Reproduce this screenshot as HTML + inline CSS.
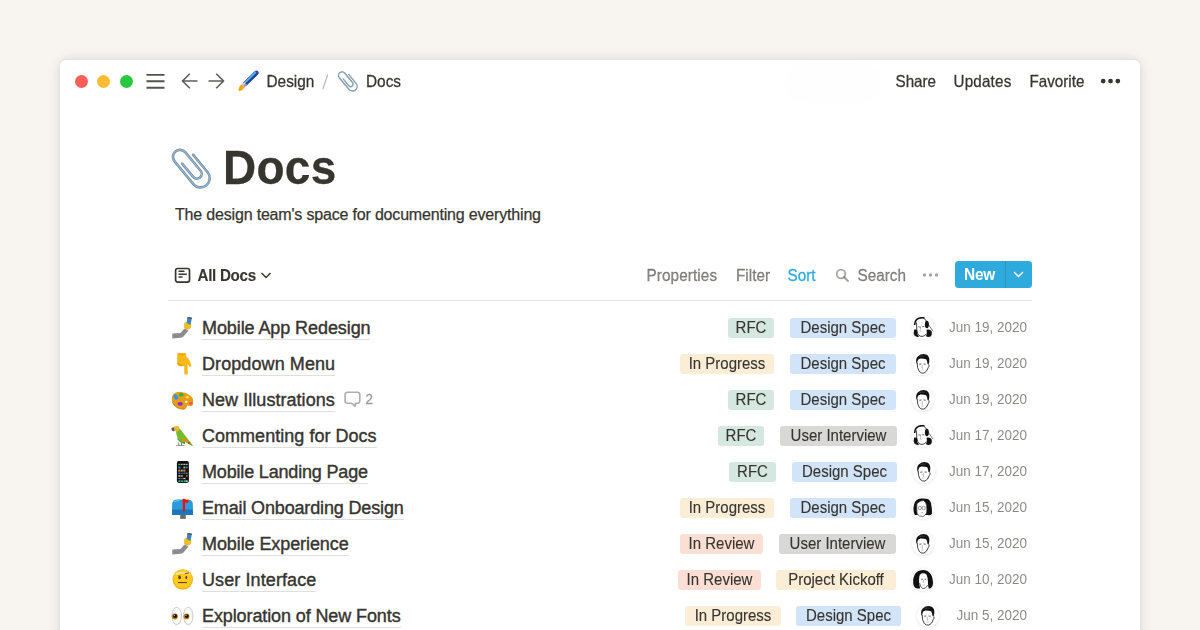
<!DOCTYPE html>
<html><head><meta charset="utf-8">
<style>
*{margin:0;padding:0;box-sizing:border-box}
html,body{width:1200px;height:630px;overflow:hidden;background:#F8F4F0;font-family:"Liberation Sans",sans-serif;color:#37352F}
.a,.tag{-webkit-text-stroke:0.25px currentColor}
.win{position:absolute;left:60px;top:60px;width:1080px;height:640px;background:#fff;border-radius:6px;box-shadow:0 0 1px rgba(0,0,0,0.07),0 0 6px rgba(0,0,0,0.05),0 0 14px rgba(0,0,0,0.10)}
.a{position:absolute;white-space:nowrap;line-height:20px}
.dot{position:absolute;width:13px;height:13px;border-radius:50%;top:75px}
.bc{font-size:15.4px;top:71.5px;color:#37352F;transform:scaleY(1.1);transform-origin:0 15.3px}
.mn{font-size:15.2px;top:71.5px;color:#37352F;transform:scaleY(1.1);transform-origin:0 15.3px}
.title{font-size:46px;font-weight:bold;line-height:50px;top:143px;left:223px;letter-spacing:0.25px;transform:scaleY(1.03);transform-origin:0 41px}
.sub{font-size:16px;top:204.5px;left:175px;color:#37352F;letter-spacing:-0.18px}
.tb{font-size:15.3px;top:265.5px;color:rgba(55,53,47,0.6);transform:scaleY(1.1);transform-origin:0 15.3px}
.row{font-size:18px;color:#37352F;left:202px;letter-spacing:-0.08px;-webkit-text-stroke:0.4px #37352F}
.row span{border-bottom:1px solid rgba(55,53,47,0.16);padding-bottom:1.4px}
.tag{position:absolute;height:20px;border-radius:3px;font-size:15px;line-height:20px;text-align:center;white-space:nowrap;color:#37352F}
.tag span{display:inline-block;-webkit-text-stroke:0.12px currentColor;transform:scaleY(1.1);transform-origin:0 15.2px}
.rfc{background:#D5E7E1}
.ds{background:#D2E4F9}
.ip{background:#FBEDD6}
.ir{background:#FCDFD4}
.ui{background:#D8D8D7}
.pk{background:#FBEDD6}
.date{font-size:13.5px;color:rgba(55,53,47,0.58);-webkit-text-stroke:0;text-align:right;width:100px;left:927px;transform:scaleY(1.12);transform-origin:0 14.7px}
.av{position:absolute;width:22px;height:22px;border-radius:50%;background:#fff;box-shadow:0 0 4px rgba(0,0,0,0.09),0 1px 2px rgba(0,0,0,0.04)}
.emo{position:absolute;left:171px;overflow:visible}
</style></head><body>
<svg width="0" height="0" style="position:absolute">
<defs>
<symbol id="clip" viewBox="0 0 44 44">
  <g transform="matrix(0.770 -0.638 0.638 0.770 -4.851 4.019)" fill="none" stroke-linecap="round">
    <path d="M4.4 21.3 V38.55 A4.85 4.85 0 0 0 14.1 38.55 V14.75 A7.05 7.05 0 0 0 0 14.75 V44.2 A9.25 9.25 0 0 0 18.5 44.2 V21.4" stroke="#878B90" stroke-width="2.6"/>
    <path d="M4.4 21.3 V38.55 A4.85 4.85 0 0 0 14.1 38.55 V14.75 A7.05 7.05 0 0 0 0 14.75 V44.2 A9.25 9.25 0 0 0 18.5 44.2 V21.4" stroke="#7DC0EE" stroke-width="1.0"/>
  </g>
</symbol>
<symbol id="brush" viewBox="0 0 24 24">
  <path d="M9.3 14.7 L20.3 3.9" stroke="#1F3E9C" stroke-width="4.6" stroke-linecap="round"/>
  <path d="M8.7 13.9 L19.4 3.4" stroke="#5AAEE6" stroke-width="2" stroke-linecap="round"/>
  <path d="M7 17 L9.6 14.4" stroke="#9C9C9C" stroke-width="4" />
  <path d="M6.6 16.2 L8.8 14" stroke="#D8D8D8" stroke-width="1.5" />
  <path d="M5.4 15.6 L8.4 18.6 Q6.5 22 2.6 22.3 Q2.4 18 5.4 15.6Z" fill="#F5A714"/>
</symbol>
<symbol id="selfie" viewBox="0 0 22 22">
  <path d="M1.3 16.4 L9.5 16 L13.5 11.5 L17.5 13.5 L12.5 19.5 Q11.5 20.6 9.5 20.7 L1.3 21.4 Z" fill="#8C8C8C"/>
  <path d="M13 7.2 Q13.2 4.8 15.5 5 L19.5 5.6 Q21 7.3 20 9.8 Q18.5 12.3 16 12.1 Q13 11.6 13 7.2Z" fill="#F8C21A"/>
  <path d="M13.2 9.3 Q14 11.6 16 12.1 Q18.5 12.3 20 9.8" fill="none" stroke="#E39C12" stroke-width="0.8"/>
  <g transform="rotate(10 18 4.5)">
    <rect x="15.8" y="0.2" width="4.4" height="7" rx="0.6" fill="#3E86C4"/>
    <rect x="15.8" y="0.2" width="4.4" height="1.5" rx="0.4" fill="#5A5A5A"/>
  </g>
  <path d="M14 7.8 Q15.5 6.6 17.5 7.4" stroke="#F8C21A" stroke-width="1.6" fill="none"/>
</symbol>
<symbol id="point" viewBox="0 0 22 24">
  <path d="M6.2 2.5 Q6.2 1.1 7.6 1.1 L13.8 1.1 Q15.3 1.1 15.3 2.5 L15.3 4.5 Q17.5 6 18.8 9 L20.6 14 L18.8 15 L16.5 12 L16.8 21.5 Q16.6 22.7 15 22.7 Q13.3 22.7 13.3 21.5 L13.3 14.3 L9 14.3 Q6.2 14.3 6.2 11.5 Z" fill="#F8B918"/>
  <path d="M6.5 11 Q7.5 13 11 13.3" stroke="#E69A10" stroke-width="1.2" fill="none"/>
  <path d="M7.5 2.5 L14 2.5" stroke="#F5A510" stroke-width="1.5"/>
</symbol>
<symbol id="palette" viewBox="0 0 22 22">
  <path d="M1.2 8.5 Q3 3.5 10 3.9 Q18 4.6 21.5 10 Q23 13.5 22 16.5 Q20.5 19 18 18 Q16.5 17 15.5 18.5 Q14.5 21.5 11.5 21.2 Q4 20.3 1.5 14.5 Q0.3 11.5 1.2 8.5Z" fill="#E69B1B"/>
  <path d="M1.5 14.5 Q4 20.3 11.5 21.2 Q14.5 21.5 15.5 18.5" fill="none" stroke="#C97A14" stroke-width="0.9"/>
  <ellipse cx="4.8" cy="9" rx="2.1" ry="2.8" fill="#2A9BE0" transform="rotate(-35 4.8 9)"/>
  <ellipse cx="10.2" cy="6.8" rx="2.4" ry="1.7" fill="#27B53F"/>
  <ellipse cx="16.3" cy="9.2" rx="1.8" ry="1.4" fill="#F6D31B"/>
  <ellipse cx="9.2" cy="15.8" rx="2.6" ry="1.9" fill="#8F2DC9"/>
  <ellipse cx="19.9" cy="15.3" rx="1.6" ry="1.4" fill="#F2524D"/>
  <ellipse cx="15.3" cy="13.8" rx="1.3" ry="1" fill="#fff"/>
</symbol>
<symbol id="parrot" viewBox="0 0 22 22">
  <path d="M4.5 4.5 Q8 3.5 10 6 L14.5 12 L22 21.5 L21 22 L14 18 Q9 17.5 6.5 13.5 Q5 10 5 7Z" fill="#72BD2C"/>
  <path d="M6.5 13.5 Q9 17.5 14 18 L14 20 Q9 19 6.5 15.5Z" fill="#4C9A1E"/>
  <path d="M10 14.5 Q14.5 13.8 17 16.5 L18.5 18.5 L14 18 Q11.5 17 10 14.5Z" fill="#D68E1D"/>
  <path d="M2 3.2 Q5 1.2 8.2 2.5 Q9 5.5 7.2 7.2 Q5 8 3.5 6.5Z" fill="#F0B92C"/>
  <path d="M0.3 4.8 Q1 3 3 3.6 L3.6 7.1 Q1.5 7.5 0.6 6Z" fill="#5E5E5E"/>
  <rect x="17" y="18.3" width="2.2" height="1.3" fill="#E21F1F"/>
  <path d="M5 21.8 L13.5 21.8" stroke="#777" stroke-width="0.9"/>
  <path d="M7.5 18.5 L8 21.8 M10.5 19 L10.5 21.8" stroke="#555" stroke-width="0.8"/>
</symbol>
<symbol id="phone" viewBox="0 0 22 24">
  <rect x="5.9" y="1.1" width="12" height="21.8" rx="1.8" fill="#111"/>
  <rect x="7.3" y="3.8" width="2.2" height="1.3" fill="#3DBB55"/>
  <rect x="10.3" y="3.8" width="1.2" height="1.3" fill="#eee"/>
  <rect x="12.3" y="3.8" width="2.2" height="1.2" fill="#bbb"/>
  <rect x="15.2" y="3.8" width="1.3" height="1.3" fill="#ddd"/>
  <rect x="7.3" y="6.6" width="2.2" height="1.8" fill="#2A8FD8"/>
  <rect x="12.3" y="6.6" width="2.2" height="1.8" fill="#b9a78a"/>
  <rect x="15.2" y="6.6" width="1.3" height="1.8" fill="#3a9ee8"/>
  <rect x="7.3" y="9.6" width="2.2" height="2" fill="#E18C1A"/>
  <rect x="10.3" y="9.6" width="1.3" height="2" fill="#ddd"/>
  <rect x="12.3" y="9.6" width="2.2" height="2" fill="#C98233"/>
  <rect x="7.3" y="12.6" width="2.2" height="1.2" fill="#2A8FD8"/>
  <rect x="10.3" y="12.6" width="1.3" height="1.2" fill="#B02ED0"/>
  <rect x="12.3" y="12.6" width="2.2" height="1.2" fill="#2A8FD8"/>
  <rect x="15.2" y="12.6" width="1.3" height="1.2" fill="#EFA52A"/>
  <rect x="7.3" y="14.9" width="2.2" height="2" fill="#999"/>
  <rect x="10.3" y="14.9" width="1.3" height="2" fill="#EFB52A"/>
  <rect x="15.2" y="14.9" width="1.3" height="2" fill="#888"/>
  <rect x="7.3" y="17.9" width="2.2" height="1.2" fill="#2A8FD8"/>
  <rect x="10.3" y="17.9" width="1.3" height="1.2" fill="#E84848"/>
  <rect x="12.3" y="17.9" width="2.2" height="1.2" fill="#ccc"/>
  <rect x="7.3" y="20.3" width="2.2" height="1.8" fill="#3DBB55"/>
  <rect x="10" y="20.3" width="2.2" height="1.8" fill="#2A8FD8"/>
  <rect x="12.7" y="20.3" width="2.2" height="1.8" fill="#3DBB55"/>
  <rect x="15.2" y="20.3" width="1.4" height="1.8" fill="#eee"/>
</symbol>
<symbol id="mail" viewBox="0 0 22 24">
  <path d="M1.1 9 Q1.1 3.6 6.5 3.6 L16.5 3.6 Q21.9 3.6 21.9 9 L21.9 18.9 L1.1 18.9Z" fill="#2D9BDA"/>
  <path d="M1.1 13.5 L21.9 13.5 L21.9 18.9 L1.1 18.9Z" fill="#1D76BC"/>
  <path d="M3 6 Q5 4.5 8 4.8" stroke="#7DCBF2" stroke-width="1" fill="none"/>
  <rect x="9.2" y="18.9" width="5.6" height="4" fill="#6a6a6a"/>
  <rect x="11.8" y="2.9" width="2.2" height="12.4" fill="#EE1010"/>
  <rect x="11.8" y="2.9" width="5.5" height="3.8" fill="#EE1010"/>
  <rect x="14.5" y="2.9" width="2.8" height="1" fill="#F5C94A"/>
</symbol>
<symbol id="raised" viewBox="0 0 24 24">
  <circle cx="11.75" cy="11.5" r="10.25" fill="#F5B116"/>
  <circle cx="11.75" cy="10.8" r="9.4" fill="#FCCB22"/>
  <path d="M5 6 Q11.75 3.5 18.5 6" stroke="#FDE58A" stroke-width="2" fill="none"/>
  <ellipse cx="8.6" cy="9.5" rx="1.4" ry="1.7" fill="#6B3A12"/>
  <ellipse cx="15.3" cy="9.5" rx="0.9" ry="1.7" fill="#6B3A12"/>
  <path d="M6.8 7.4 L10 8" stroke="#A57030" stroke-width="0.7"/>
  <path d="M13.8 5.5 L18 5" stroke="#6B3A12" stroke-width="0.9"/>
  <rect x="7" y="14" width="8.9" height="1.1" fill="#6B3A12"/>
</symbol>
<symbol id="eyes" viewBox="0 0 24 24">
  <ellipse cx="5.7" cy="12" rx="4.8" ry="8.6" fill="#fff" stroke="#BDBDBD" stroke-width="0.8"/>
  <ellipse cx="17.25" cy="12" rx="4.7" ry="8.6" fill="#fff" stroke="#BDBDBD" stroke-width="0.8"/>
  <circle cx="3.8" cy="12.4" r="3" fill="#C47A14"/>
  <circle cx="4.1" cy="12.1" r="2" fill="#111"/>
  <circle cx="15.5" cy="12.4" r="2.9" fill="#C47A14"/>
  <circle cx="15.8" cy="12.1" r="1.9" fill="#111"/>
  <circle cx="3.3" cy="11.3" r="0.6" fill="#fff"/>
  <circle cx="15" cy="11.3" r="0.6" fill="#fff"/>
</symbol>
<symbol id="man" viewBox="0 0 22 22">
  <path d="M4.3 10 Q3.5 5.5 6 3.2 Q9 0.6 13 1.2 Q16.8 2 17.3 6 Q17.5 9 16.6 11.6 L15.5 11 Q15.3 7.6 14.2 6.2 Q11.5 5.5 8.5 5.6 Q6.2 6 5.5 8 L5.2 10.8 Z" fill="#111"/>
  <path d="M7.5 3.5 Q10 2.6 12.5 3.2" stroke="#555" stroke-width="0.6" fill="none"/>
  <path d="M5.2 10 Q5 15 7.3 18.5 Q9.3 20.6 12 20.1 Q15 18.8 16.3 14.5 Q17.4 13.5 16.9 11.5" fill="none" stroke="#111" stroke-width="0.8"/>
  <path d="M7.3 11.2 L9.4 11 M11.6 11 L13.7 11.2" stroke="#333" stroke-width="0.8"/>
  <path d="M10.4 12 L10 15 L11 15.3" stroke="#777" stroke-width="0.5" fill="none"/>
  <path d="M9.2 17 Q10.5 17.5 11.8 17" stroke="#999" stroke-width="0.5" fill="none"/>
</symbol>
<symbol id="woman" viewBox="0 0 22 22">
  <path d="M2.6 8 Q3 2.5 7 1.2 Q10 0.3 12.5 1" fill="none" stroke="#111" stroke-width="1.6"/>
  <ellipse cx="14.9" cy="7.5" rx="2" ry="3.8" fill="#111"/>
  <path d="M2.2 12.5 Q1 16 2.5 18.5 Q4.5 20.5 7 19.8 Q4.5 17 4.8 12.5Z" fill="#111"/>
  <path d="M14.5 12.8 Q17 12 19.5 14 Q20.5 17.5 18.5 19.5 Q16 20.5 14 19.3 Q15.5 16.5 14.5 12.8Z" fill="#111"/>
  <path d="M11.9 1 L21 14.1" stroke="#222" stroke-width="0.6"/>
  <path d="M12.5 1.3 L15 4" stroke="#333" stroke-width="0.5"/>
  <path d="M4.5 5.5 Q4.3 14 6 17.5 Q8 20 11 19.3 Q13 18.6 14.2 17" fill="none" stroke="#111" stroke-width="0.8"/>
  <path d="M6.2 9.8 L9 10.3 M10 9.8 L12.3 9.4" stroke="#555" stroke-width="0.8"/>
  <path d="M8.6 11 L8.2 14 L9.5 14.4" stroke="#888" stroke-width="0.5" fill="none"/>
</symbol>
<symbol id="woman2" viewBox="0 0 22 22">
  <path d="M1.2 14.5 Q0.8 9 2.5 6 Q4.5 2 8 1.4 Q12 0.6 15.5 2 Q19.5 4.5 20.5 9.5 Q21.5 14 20.5 17 Q19 19.8 16.8 19.8 Q16 17 16 14 Q16.2 9 14.5 5.5 Q12.5 3.8 10 4.3 Q8 4.8 7.4 7 Q6.8 11 7.2 14.5 Q7.5 17.5 8.2 19.2 Q5 20.3 3 18.5 Q1.5 17 1.2 14.5Z" fill="#111"/>
  <path d="M7.6 14 Q8 18.5 11 19.8 Q14 19.8 15.8 16" fill="none" stroke="#222" stroke-width="0.7"/>
  <path d="M9.3 10.2 L10.9 10.2 M12.6 10.2 L14.2 10.2" stroke="#444" stroke-width="0.8"/>
  <path d="M11.6 11 L11.2 13.6 L12.2 13.9" stroke="#888" stroke-width="0.5" fill="none"/>
  <path d="M10.6 15.8 Q11.6 16.4 12.8 15.8" stroke="#888" stroke-width="0.5" fill="none"/>
</symbol>
<symbol id="woman3" viewBox="0 0 22 22">
  <path d="M2.7 18.1 Q1 14 1.6 10.1 Q2.5 4.5 4.4 3.3 Q6.5 1.6 9 1.6 Q13.5 1.2 15.9 2.1 Q19 4 19.3 7.9 Q20.2 12.5 19.9 17 Q18 18.8 15.9 18.1 Z" fill="#111"/>
  <path d="M5 6.5 Q8.5 3.3 11.5 3.5 Q13.8 5 14.6 8.5 Q15 13 14.6 16 Q13.5 18.6 10.5 19.6 Q7 19.6 5.2 17 Q4.3 11 5 6.5 Z" fill="#fff" stroke="#222" stroke-width="0.6"/>
  <circle cx="7.8" cy="11" r="1.7" fill="none" stroke="#555" stroke-width="0.6"/>
  <circle cx="11.6" cy="11" r="1.7" fill="none" stroke="#555" stroke-width="0.6"/>
  <path d="M8.6 15.6 Q9.8 16.2 11 15.6" stroke="#777" stroke-width="0.5" fill="none"/>
</symbol>
</defs>
</svg>

<div class="win"></div>
<div class="a" style="left:784px;top:63px;width:98px;height:40px;border-radius:20px;background:rgba(0,0,0,0.005);filter:blur(2px)"></div>

<!-- traffic lights -->
<div class="dot" style="left:75px;background:#FF5F57"></div>
<div class="dot" style="left:97px;background:#FDBD33"></div>
<div class="dot" style="left:120px;background:#28C840"></div>

<!-- hamburger -->
<svg class="a" style="left:145px;top:72px" width="22" height="18" viewBox="0 0 22 18">
  <path d="M1.5 2.9 H19.5 M1.5 9.3 H19.5 M1.5 15.7 H19.5" stroke="#55534E" stroke-width="1.9"/>
</svg>
<!-- arrows -->
<svg class="a" style="left:180px;top:72px" width="20" height="18" viewBox="0 0 20 18">
  <path d="M17.5 9 H2.5 M9.8 1.7 L2.5 9 L9.8 16.3" stroke="#5E5D59" stroke-width="1.6" fill="none"/>
</svg>
<svg class="a" style="left:206px;top:72px" width="20" height="18" viewBox="0 0 20 18">
  <path d="M2.5 9 H17.5 M10.2 1.7 L17.5 9 L10.2 16.3" stroke="#5E5D59" stroke-width="1.6" fill="none"/>
</svg>
<svg class="a" style="left:236px;top:69px;overflow:visible" width="24" height="24"><use href="#brush"/></svg>
<div class="a bc" style="left:266.5px">Design</div>
<svg class="a" style="left:318px;top:72px" width="14" height="20" viewBox="0 0 14 20"><path d="M9.6 3 L5 16.8" stroke="#B9B8B5" stroke-width="1.2" stroke-linecap="round"/></svg>
<svg class="a" style="left:337.25px;top:69.7px;overflow:visible" width="22.3" height="22.3"><use href="#clip"/></svg>
<div class="a bc" style="left:366px">Docs</div>

<div class="a mn" style="left:895.5px">Share</div>
<div class="a mn" style="left:953.5px;letter-spacing:0.2px">Updates</div>
<div class="a mn" style="left:1029.5px">Favorite</div>
<svg class="a" style="left:1099px;top:76px" width="24" height="10" viewBox="0 0 24 10">
  <circle cx="4.2" cy="5.1" r="2.4" fill="#37352F"/><circle cx="11.5" cy="5.1" r="2.4" fill="#37352F"/><circle cx="18.8" cy="5.1" r="2.4" fill="#37352F"/>
</svg>

<!-- title -->
<svg class="a" style="left:170px;top:146px;overflow:visible" width="44" height="44"><use href="#clip"/></svg>
<div class="a title">Docs</div>
<div class="a sub">The design team's space for documenting everything</div>

<!-- toolbar -->
<svg class="a" style="left:174px;top:266.5px" width="17" height="17" viewBox="0 0 17 17">
  <rect x="1.6" y="1.5" width="13.9" height="13.6" rx="2" fill="none" stroke="#37352F" stroke-width="1.7"/>
  <path d="M4.5 4.3 H10.5 M4.5 7.2 H12.8 M4.5 10.1 H8.5" stroke="#37352F" stroke-width="1.5"/>
</svg>
<div class="a" style="left:197.5px;top:265.6px;font-size:15.2px;font-weight:bold;letter-spacing:-0.3px;color:#37352F;-webkit-text-stroke:0.1px #37352F;transform:scaleY(1.07);transform-origin:0 15.3px">All Docs</div>
<svg class="a" style="left:260px;top:270.5px" width="12" height="9" viewBox="0 0 12 9">
  <path d="M1.5 2 L6 6.5 L10.5 2" stroke="#37352F" stroke-width="1.5" fill="none"/>
</svg>

<div class="a tb" style="left:646.5px;letter-spacing:0.1px">Properties</div>
<div class="a tb" style="left:736px">Filter</div>
<div class="a tb" style="left:787.5px;color:#2EAADC">Sort</div>
<svg class="a" style="left:835px;top:267.5px" width="15" height="15" viewBox="0 0 15 15">
  <circle cx="6" cy="6" r="4.3" stroke="rgba(55,53,47,0.45)" stroke-width="1.8" fill="none"/>
  <path d="M9.2 9.2 L13 13" stroke="rgba(55,53,47,0.45)" stroke-width="2" stroke-linecap="round"/>
</svg>
<div class="a tb" style="left:857.5px">Search</div>
<svg class="a" style="left:921px;top:270px" width="20" height="10" viewBox="0 0 20 10">
  <circle cx="3.5" cy="5" r="1.7" fill="rgba(55,53,47,0.45)"/><circle cx="9.5" cy="5" r="1.7" fill="rgba(55,53,47,0.45)"/><circle cx="15.5" cy="5" r="1.7" fill="rgba(55,53,47,0.45)"/>
</svg>
<div class="a" style="left:955px;top:261px;width:77px;height:27px;background:#2EAADC;border-radius:3.5px"></div>
<div class="a" style="left:1005px;top:261px;width:1px;height:27px;background:rgba(0,0,0,0.13)"></div>
<div class="a" style="left:964px;top:265px;font-size:15.5px;font-weight:bold;color:#fff;letter-spacing:-0.3px;-webkit-text-stroke:0;transform:scaleY(1.08);transform-origin:0 15.4px">New</div>
<svg class="a" style="left:1011.5px;top:270px" width="13" height="9" viewBox="0 0 13 9">
  <path d="M2 2 L6.5 6.5 L11 2" stroke="#fff" stroke-width="1.5" fill="none"/>
</svg>
<div class="a" style="left:168px;top:300px;width:864px;height:1px;background:#E6E5E2"></div>

<!-- rows -->
<svg class="emo" style="top:317px;width:22px;height:22px"><use href="#selfie"/></svg>
<div class="a row" style="top:317.8px;letter-spacing:-0.086px"><span>Mobile App Redesign</span></div>
<svg class="emo" style="top:352px;width:22px;height:24px"><use href="#point"/></svg>
<div class="a row" style="top:353.8px;letter-spacing:0.087px"><span>Dropdown Menu</span></div>
<svg class="emo" style="top:388px;width:22px;height:22px"><use href="#palette"/></svg>
<div class="a row" style="top:389.8px;letter-spacing:0.045px"><span>New Illustrations</span></div>
<svg class="a" style="left:343px;top:391px" width="18" height="17" viewBox="0 0 18 17">
  <path d="M4.6 1.2 H14.3 Q16.8 1.2 16.8 3.7 V9.8 Q16.8 12.3 14.3 12.3 H12.3 V15.3 L8.6 12.3 H4.6 Q2.1 12.3 2.1 9.8 V3.7 Q2.1 1.2 4.6 1.2 Z" fill="none" stroke="rgba(55,53,47,0.4)" stroke-width="1.6" stroke-linejoin="round"/>
</svg>
<div class="a" style="left:365.5px;top:389.5px;font-size:13.5px;color:rgba(55,53,47,0.45);transform:scaleY(1.1);transform-origin:0 14.7px">2</div>
<svg class="emo" style="top:424px;width:22px;height:22px"><use href="#parrot"/></svg>
<div class="a row" style="top:425.8px;letter-spacing:0.031px"><span>Commenting for Docs</span></div>
<svg class="emo" style="top:460px;width:22px;height:24px"><use href="#phone"/></svg>
<div class="a row" style="top:461.8px;letter-spacing:-0.174px"><span>Mobile Landing Page</span></div>
<svg class="emo" style="top:496px;width:22px;height:24px"><use href="#mail"/></svg>
<div class="a row" style="top:497.8px;letter-spacing:-0.153px"><span>Email Onboarding Design</span></div>
<svg class="emo" style="top:533px;width:22px;height:22px"><use href="#selfie"/></svg>
<div class="a row" style="top:533.8px;letter-spacing:-0.086px"><span>Mobile Experience</span></div>
<svg class="emo" style="top:568px;width:24px;height:24px"><use href="#raised"/></svg>
<div class="a row" style="top:569.8px;letter-spacing:0.097px"><span>User Interface</span></div>
<svg class="emo" style="top:604px;width:24px;height:24px"><use href="#eyes"/></svg>
<div class="a row" style="top:605.8px;letter-spacing:-0.106px"><span>Exploration of New Fonts</span></div>

<!-- tags -->
<div class="tag rfc" style="left:728px;top:317.8px;width:46px"><span>RFC</span></div>
<div class="tag ds" style="left:790px;top:317.8px;width:106px"><span>Design Spec</span></div>
<div class="tag ip" style="left:680px;top:353.8px;width:94px"><span>In Progress</span></div>
<div class="tag ds" style="left:790px;top:353.8px;width:106px"><span>Design Spec</span></div>
<div class="tag rfc" style="left:728px;top:389.8px;width:46px"><span>RFC</span></div>
<div class="tag ds" style="left:790px;top:389.8px;width:106px"><span>Design Spec</span></div>
<div class="tag rfc" style="left:718px;top:425.8px;width:46px"><span>RFC</span></div>
<div class="tag ui" style="left:780px;top:425.8px;width:117px"><span>User Interview</span></div>
<div class="tag rfc" style="left:729px;top:461.8px;width:47px"><span>RFC</span></div>
<div class="tag ds" style="left:792px;top:461.8px;width:105px"><span>Design Spec</span></div>
<div class="tag ip" style="left:680px;top:497.8px;width:94px"><span>In Progress</span></div>
<div class="tag ds" style="left:790px;top:497.8px;width:106px"><span>Design Spec</span></div>
<div class="tag ir" style="left:680px;top:533.8px;width:83px"><span>In Review</span></div>
<div class="tag ui" style="left:779px;top:533.8px;width:117px"><span>User Interview</span></div>
<div class="tag ir" style="left:678px;top:569.8px;width:83px"><span>In Review</span></div>
<div class="tag pk" style="left:776px;top:569.8px;width:120px"><span>Project Kickoff</span></div>
<div class="tag ip" style="left:685px;top:605.8px;width:96px"><span>In Progress</span></div>
<div class="tag ds" style="left:796px;top:605.8px;width:105px"><span>Design Spec</span></div>

<!-- avatars -->
<div class="av" style="left:912px;top:317px"><svg width="22" height="22"><use href="#woman"/></svg></div>
<div class="av" style="left:912px;top:353px"><svg width="22" height="22"><use href="#man"/></svg></div>
<div class="av" style="left:912px;top:389px"><svg width="22" height="22"><use href="#man"/></svg></div>
<div class="av" style="left:912px;top:425px"><svg width="22" height="22"><use href="#woman"/></svg></div>
<div class="av" style="left:913px;top:461px"><svg width="22" height="22"><use href="#man"/></svg></div>
<div class="av" style="left:912px;top:497px"><svg width="22" height="22"><use href="#woman3"/></svg></div>
<div class="av" style="left:912px;top:533px"><svg width="22" height="22"><use href="#man"/></svg></div>
<div class="av" style="left:912px;top:569px"><svg width="22" height="22"><use href="#woman2"/></svg></div>
<div class="av" style="left:917px;top:605px"><svg width="22" height="22"><use href="#man"/></svg></div>

<!-- dates -->
<div class="a date" style="top:318px">Jun 19, 2020</div>
<div class="a date" style="top:354px">Jun 19, 2020</div>
<div class="a date" style="top:390px">Jun 19, 2020</div>
<div class="a date" style="top:426px">Jun 17, 2020</div>
<div class="a date" style="top:462px">Jun 17, 2020</div>
<div class="a date" style="top:498px">Jun 15, 2020</div>
<div class="a date" style="top:534px">Jun 15, 2020</div>
<div class="a date" style="top:570px">Jun 10, 2020</div>
<div class="a date" style="top:606px">Jun 5, 2020</div>

</body></html>
